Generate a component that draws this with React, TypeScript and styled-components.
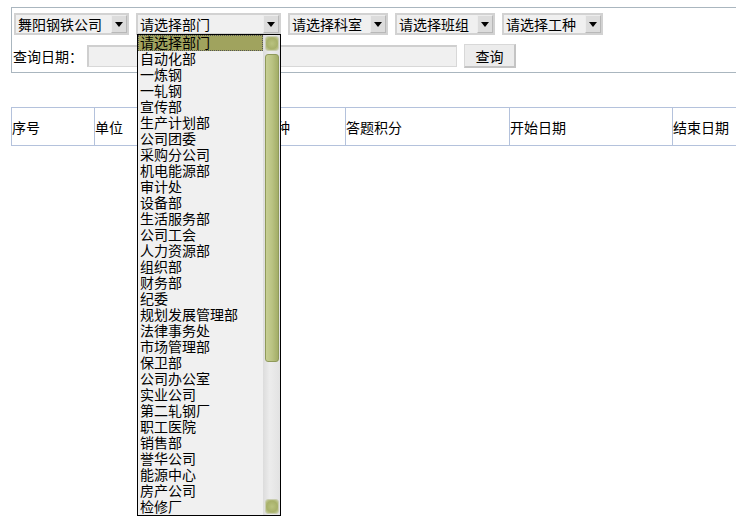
import React from 'react'
import styled, { createGlobalStyle } from 'styled-components'

const GlobalStyle = createGlobalStyle`
  html {
    overflow: hidden;
  }
  body {
    margin: 0;
    padding: 0;
    background: #fff;
    font-family: "SimSun", "Noto Sans CJK SC", sans-serif;
    font-size: 14px;
    color: #000;
    min-height: 524px;
  }
`

const Page = styled.div`
  padding: 7px 0 0 11px;
  width: 900px;
`

const SearchBox = styled.div`
  border: 1px solid #aab6bf;
  border-right: none;
  padding: 5px 0 0 2px;
  box-sizing: border-box;
  height: 66px;
  display: flex;
  flex-direction: column;
  gap: 9px;
`

const SelectRow = styled.div`
  display: flex;
  gap: 7px;
  height: 22px;
`

const SelectWrap = styled.div<{ $w: number }>`
  position: relative;
  width: ${(p) => p.$w}px;
  height: 22px;
  box-sizing: border-box;
  border: 2px solid #d2d2d2;
  background: #f0f0f0;
  display: flex;
  align-items: center;
`

const SelectText = styled.span`
  flex: 1;
  padding-left: 2px;
  line-height: 18px;
  white-space: nowrap;
  overflow: hidden;
`

const ArrowBtn = styled.span`
  width: 16px;
  height: 18px;
  box-sizing: border-box;
  background: #dcdcdc;
  border-right: 1px solid #b8b8b8;
  border-bottom: 1px solid #b8b8b8;
  border-top: 1px solid #ededed;
  border-left: 1px solid #ededed;
  display: flex;
  align-items: center;
  justify-content: center;
  &::after {
    content: '';
    border-left: 4px solid transparent;
    border-right: 4px solid transparent;
    border-top: 5px solid #000;
    margin-top: 1px;
  }
`

const DateRow = styled.div`
  display: flex;
  align-items: center;
  height: 24px;
`

const Label = styled.span`
  width: 74px;
  margin-left: -1px;
  line-height: 16px;
`

const DateInput = styled.div`
  width: 370px;
  height: 22px;
  box-sizing: border-box;
  background: #f0f0f0;
  border: 1px solid #d8d8d8;
  border-left: 2px solid #cfcfcf;
  border-top: 2px solid #cfcfcf;
`

const QueryButton = styled.div`
  margin-left: 7px;
  width: 52px;
  height: 24px;
  box-sizing: border-box;
  background: #ececec;
  border: 1px solid #d8d8d8;
  border-right: 2px solid #c4c4c4;
  border-bottom: 2px solid #c4c4c4;
  display: flex;
  align-items: center;
  justify-content: center;
  line-height: 16px;
`

const DropList = styled.div`
  position: absolute;
  top: 19px;
  left: -1px;
  width: 144px;
  height: 482px;
  box-sizing: border-box;
  border: 1px solid #000;
  background: #f0f0f0;
  display: flex;
  z-index: 10;
`

const Options = styled.div`
  flex: 1;
  display: flex;
  flex-direction: column;
`

const Option = styled.div<{ $active?: boolean }>`
  height: 16px;
  line-height: 15px;
  padding-left: 2px;
  white-space: nowrap;
  background: ${(p) => (p.$active ? '#a0a35e' : 'transparent')};
  outline: ${(p) => (p.$active ? '1px dotted #555' : 'none')};
  outline-offset: -1px;
`

const ScrollBar = styled.div`
  width: 17px;
  background: linear-gradient(to right, #dcdcdc, #ececec 40%, #e2e2e2);
  display: flex;
  flex-direction: column;
  align-items: center;
  padding: 1px 0;
  box-sizing: border-box;
`

const ScrollBtn = styled.div`
  width: 14px;
  height: 15px;
  box-sizing: border-box;
  border: 1px solid #c9cdb0;
  border-radius: 3px;
  background: radial-gradient(circle at 50% 50%, #b9c27f 0, #a8b16b 60%, #c8cea0 100%);
`

const Thumb = styled.div`
  margin-top: 3px;
  width: 14px;
  height: 308px;
  box-sizing: border-box;
  border: 1px solid #8f9a5a;
  border-radius: 3px;
  background: linear-gradient(to right, #c8cf94, #bac383 50%, #a3ad67);
`

const Track = styled.div`
  flex: 1;
`

const Table = styled.table`
  margin-top: 34px;
  border-collapse: collapse;
  table-layout: fixed;
  width: 900px;
  th {
    border: 1px solid #b4c2dc;
    height: 37px;
    padding: 0;
    text-align: left;
    font-weight: normal;
    line-height: 16px;
  }
`

const departments = [
  '请选择部门', '自动化部', '一炼钢', '一轧钢', '宣传部', '生产计划部', '公司团委', '采购分公司',
  '机电能源部', '审计处', '设备部', '生活服务部', '公司工会', '人力资源部', '组织部', '财务部',
  '纪委', '规划发展管理部', '法律事务处', '市场管理部', '保卫部', '公司办公室', '实业公司',
  '第二轧钢厂', '职工医院', '销售部', '誉华公司', '能源中心', '房产公司', '检修厂',
]

const columns = [
  { title: '序号', w: 83 },
  { title: '单位', w: 86 },
  { title: '部门', w: 81 },
  { title: '工种', w: 84 },
  { title: '答题积分', w: 164 },
  { title: '开始日期', w: 163 },
  { title: '结束日期', w: 239 },
]

const App = () => (
  <>
    <GlobalStyle />
    <Page>
      <SearchBox>
        <SelectRow>
          <SelectWrap $w={115}>
            <SelectText>舞阳钢铁公司</SelectText>
            <ArrowBtn />
          </SelectWrap>
          <SelectWrap $w={145}>
            <SelectText>请选择部门</SelectText>
            <ArrowBtn />
            <DropList>
              <Options>
                {departments.map((d, i) => (
                  <Option key={d} $active={i === 0}>
                    {d}
                  </Option>
                ))}
              </Options>
              <ScrollBar>
                <ScrollBtn />
                <Thumb />
                <Track />
                <ScrollBtn />
              </ScrollBar>
            </DropList>
          </SelectWrap>
          <SelectWrap $w={100}>
            <SelectText>请选择科室</SelectText>
            <ArrowBtn />
          </SelectWrap>
          <SelectWrap $w={100}>
            <SelectText>请选择班组</SelectText>
            <ArrowBtn />
          </SelectWrap>
          <SelectWrap $w={101}>
            <SelectText>请选择工种</SelectText>
            <ArrowBtn />
          </SelectWrap>
        </SelectRow>
        <DateRow>
          <Label>查询日期：</Label>
          <DateInput />
          <QueryButton>查询</QueryButton>
        </DateRow>
      </SearchBox>
      <Table>
        <colgroup>
          {columns.map((c) => (
            <col key={c.title} style={{ width: c.w }} />
          ))}
        </colgroup>
        <thead>
          <tr>
            {columns.map((c) => (
              <th key={c.title}>{c.title}</th>
            ))}
          </tr>
        </thead>
      </Table>
    </Page>
  </>
)

export default App
